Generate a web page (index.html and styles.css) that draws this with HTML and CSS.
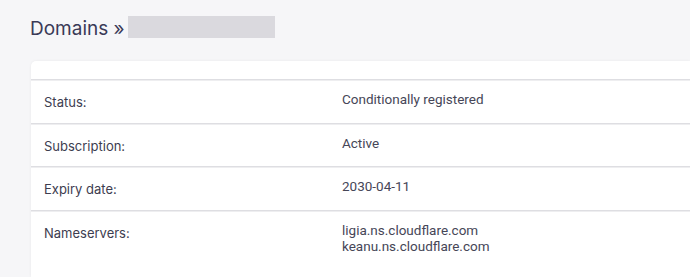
FILE: index.html
```html
<!DOCTYPE html>
<html>
<head>
    <title>Domains</title>
    <link rel="stylesheet" href="styles.css">
</head>
<body>
    <div class="page">
        <div class="page-title">
            <h1>Domains &raquo;</h1>
            <span class="redacted"></span>
        </div>

        <div class="card">
            <div class="card-head"></div>
            <div class="info-row">
                <div class="info-label">Status:</div>
                <div class="info-value">Conditionally registered</div>
            </div>
            <div class="info-row">
                <div class="info-label">Subscription:</div>
                <div class="info-value">Active</div>
            </div>
            <div class="info-row">
                <div class="info-label">Expiry date:</div>
                <div class="info-value">2030-04-11</div>
            </div>
            <div class="info-row">
                <div class="info-label">Nameservers:</div>
                <div class="info-value">ligia.ns.cloudflare.com<br>keanu.ns.cloudflare.com</div>
            </div>
        </div>
    </div>
</body>
</html>
```

FILE: styles.css
```css
/* Base */
* {
    margin: 0;
    padding: 0;
    box-sizing: border-box;
}

body {
    background-color: #f6f6f8;
    color: #3b3b4f;
    font-family: Inter, "Liberation Sans", sans-serif;
    overflow: hidden;
}

.page {
    padding: 16px 0 0 30px;
}

/* Title */
.page-title {
    display: flex;
    align-items: center;
    gap: 3px;
    height: 22px;
}

.page-title h1 {
    font-size: 19px;
    font-weight: 400;
    color: #3a3a57;
    line-height: 22px;
    padding-top: 3px;
}

.redacted {
    display: block;
    width: 147px;
    height: 22px;
    background: #dad9de;
}

/* Card */
.card {
    background: white;
    margin: 23px 0 0 1px;
    border-radius: 5px 0 0 0;
    box-shadow: 0 0 3px rgba(0, 0, 0, 0.06);
}

.card-head {
    height: 18px;
}

.info-row {
    display: flex;
    border-top: 1px solid #dedee2;
    box-shadow: inset 0 1px 0 #eeeef0;
    height: 43.5px;
    padding-top: 11px;
    font-size: 13px;
}

.info-row:last-child {
    height: 67.5px;
}

.info-label {
    width: 311px;
    padding-left: 13px;
    padding-top: 3px;
    color: #3d3d50;
}

.info-value {
    font-family: Roboto, "Liberation Sans", sans-serif;
    font-size: 13.5px;
    color: #464657;
    line-height: 16px;
}
```
